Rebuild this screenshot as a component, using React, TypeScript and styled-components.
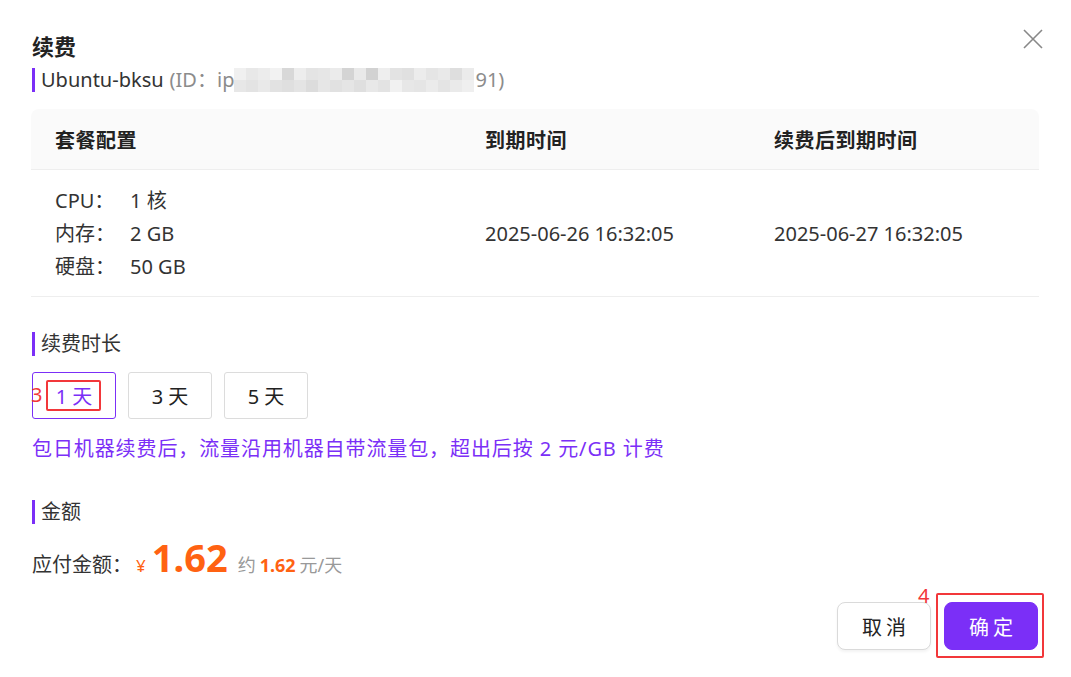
import React from "react";
import styled, { createGlobalStyle } from "styled-components";

const GlobalStyle = createGlobalStyle`
  html, body {
    margin: 0;
    padding: 0;
    background: #fff;
  }
  body {
    font-family: "Noto Sans", "Noto Sans CJK SC", sans-serif;
    color: #333;
  }
`;

const purple = "#7b2ff7";
const orange = "#ff6212";
const red = "#f2373a";

const Dialog = styled.div`
  position: relative;
  width: 1071px;
  height: 677px;
  box-sizing: border-box;
  padding: 32px 32px 0 32px;
  display: flex;
  flex-direction: column;
`;

const Title = styled.h2`
  margin: 0;
  font-size: 22px;
  line-height: 28px;
  font-weight: 700;
  color: #222;
`;

const CloseButton = styled.button`
  position: absolute;
  top: 27px;
  right: 26px;
  width: 24px;
  height: 24px;
  padding: 0;
  border: none;
  background: none;
  color: #888;
  display: flex;
  align-items: center;
  justify-content: center;
`;

const SectionLabel = styled.div<{ $mt?: number }>`
  display: flex;
  align-items: center;
  height: 24px;
  margin-top: ${(p) => p.$mt ?? 0}px;
  font-size: 20px;
  line-height: 24px;
  color: #333;
  border-left: 3px solid ${purple};
  padding-left: 6px;
`;

const Muted = styled.span`
  color: #8c8c8c;
  margin-left: 6px;
  display: inline-flex;
  align-items: center;
`;

const Mosaic = styled.span`
  display: inline-grid;
  grid-template-columns: repeat(20, 12px);
  grid-template-rows: 12px 12px;
  margin: 0 1px 0 0;
`;

const Tile = styled.span<{ $c: string }>`
  background: ${(p) => p.$c};
`;

const Table = styled.div`
  margin-top: 17px;
  width: 1008px;
  margin-left: -1px;
`;

const HeadRow = styled.div`
  display: grid;
  grid-template-columns: 430px 289px 1fr;
  height: 60px;
  align-items: center;
  padding: 0 24px;
  background: #fafafa;
  border-radius: 8px 8px 0 0;
  border-bottom: 1px solid #eeeeee;
  font-size: 20px;
  font-weight: 700;
  color: #222;
  letter-spacing: 0.5px;
`;

const BodyRow = styled.div`
  display: grid;
  grid-template-columns: 430px 289px 1fr;
  height: 126px;
  align-items: center;
  padding: 0 24px;
  border-bottom: 1px solid #eeeeee;
  font-size: 20px;
  color: #333;
`;

const SpecList = styled.div`
  display: grid;
  grid-template-columns: 75px auto;
  line-height: 33px;
`;

const DurationRow = styled.div`
  display: flex;
  gap: 12px;
  margin-top: 16px;
`;

const DurationButton = styled.button<{ $active?: boolean }>`
  position: relative;
  width: 84px;
  height: 47px;
  box-sizing: border-box;
  border: 1px solid ${(p) => (p.$active ? purple : "#dcdcdc")};
  border-radius: 3px;
  background: #fff;
  color: ${(p) => (p.$active ? purple : "#222")};
  font-family: inherit;
  font-size: 20px;
  padding: 0;
`;

const Notice = styled.p`
  margin: 17px 0 0;
  font-size: 20px;
  line-height: 26px;
  letter-spacing: 0.9px;
  color: ${purple};
`;

const AmountRow = styled.div`
  display: flex;
  align-items: baseline;
  margin-top: 11px;
  font-size: 20px;
  color: #333;
`;

const Currency = styled.span`
  color: ${orange};
  font-size: 17px;
  margin-left: 4px;
`;

const BigPrice = styled.span`
  color: ${orange};
  font-size: 38px;
  font-weight: 700;
  margin-left: 6px;
  line-height: 44px;
`;

const PerDay = styled.span`
  font-size: 18px;
  color: #999;
  margin-left: 10px;
`;

const PerDayPrice = styled.b`
  color: ${orange};
  font-weight: 700;
  margin: 0 4px;
`;

const Footer = styled.div`
  display: flex;
  justify-content: flex-end;
  gap: 13px;
  margin-top: 23px;
  padding-right: 1px;
`;

const FooterButton = styled.button<{ $primary?: boolean }>`
  position: relative;
  width: 94px;
  height: 48px;
  box-sizing: border-box;
  border-radius: 8px;
  font-family: inherit;
  font-size: 20px;
  letter-spacing: 4px;
  text-indent: 4px;
  padding: 0;
  border: 1px solid ${(p) => (p.$primary ? purple : "#dadada")};
  background: ${(p) => (p.$primary ? purple : "#fff")};
  color: ${(p) => (p.$primary ? "#fff" : "#222")};
  box-shadow: ${(p) => (p.$primary ? "none" : "0 2px 3px rgba(0,0,0,0.05)")};
`;

const MarkBox = styled.span<{ $l: number; $t: number; $w: number; $h: number }>`
  position: absolute;
  left: ${(p) => p.$l}px;
  top: ${(p) => p.$t}px;
  width: ${(p) => p.$w}px;
  height: ${(p) => p.$h}px;
  box-sizing: border-box;
  border: 2px solid ${red};
  border-radius: 2px;
`;

const MarkNum = styled.span<{ $l: number; $t: number; $size: number }>`
  position: absolute;
  left: ${(p) => p.$l}px;
  top: ${(p) => p.$t}px;
  color: ${red};
  font-size: ${(p) => p.$size}px;
  line-height: 1;
  letter-spacing: 0;
  text-indent: 0;
`;

const mosaicShades = [
  "#f0f0f0", "#e8e8e8", "#ececec", "#f2f2f2", "#d8d8d8", "#ededed", "#e4e4e4", "#e6e6e6",
  "#ebebeb", "#d4d4d4", "#e9e9e9", "#d2d2d2", "#eeeeee", "#e3e3e3", "#e0e0e0", "#ececec",
  "#e5e5e5", "#e9e9e9", "#dedede", "#ebebeb",
  "#e7e7e7", "#e3e3e3", "#e9e9e9", "#e2e2e2", "#dfdfdf", "#e4e4e4", "#dcdcdc", "#e6e6e6",
  "#e1e1e1", "#e5e5e5", "#dfdfdf", "#e8e8e8", "#e3e3e3", "#f1f1f1", "#e7e7e7", "#e5e5e5",
  "#ebebeb", "#e4e4e4", "#eaeaea", "#efefef",
];

const durations = [1, 3, 5];

export default function App() {
  return (
    <Dialog>
      <GlobalStyle />
      <Title>续费</Title>
      <CloseButton aria-label="close">
        <svg width="22" height="22" viewBox="0 0 22 22">
          <path d="M2 2 L20 20 M20 2 L2 20" stroke="currentColor" strokeWidth="1.6" />
        </svg>
      </CloseButton>

      <SectionLabel $mt={8}>
        Ubuntu-bksu
        <Muted>
          (ID：ip
          <Mosaic>
            {mosaicShades.map((c, i) => (
              <Tile key={i} $c={c} />
            ))}
          </Mosaic>
          91)
        </Muted>
      </SectionLabel>

      <Table>
        <HeadRow>
          <div>套餐配置</div>
          <div>到期时间</div>
          <div>续费后到期时间</div>
        </HeadRow>
        <BodyRow>
          <SpecList>
            <span>CPU：</span>
            <span>1 核</span>
            <span>内存：</span>
            <span>2 GB</span>
            <span>硬盘：</span>
            <span>50 GB</span>
          </SpecList>
          <div>2025-06-26 16:32:05</div>
          <div>2025-06-27 16:32:05</div>
        </BodyRow>
      </Table>

      <SectionLabel $mt={35}>续费时长</SectionLabel>
      <DurationRow>
        {durations.map((d) => (
          <DurationButton key={d} $active={d === 1}>
            {d} 天
            {d === 1 && (
              <>
                <MarkBox $l={13} $t={7} $w={55} $h={31} />
                <MarkNum $l={-2} $t={12} $size={20}>
                  3
                </MarkNum>
              </>
            )}
          </DurationButton>
        ))}
      </DurationRow>
      <Notice>包日机器续费后，流量沿用机器自带流量包，超出后按 2 元/GB 计费</Notice>

      <SectionLabel $mt={38}>金额</SectionLabel>
      <AmountRow>
        应付金额：
        <Currency>¥</Currency>
        <BigPrice>1.62</BigPrice>
        <PerDay>
          约<PerDayPrice>1.62</PerDayPrice>元/天
        </PerDay>
      </AmountRow>

      <Footer>
        <FooterButton>取消</FooterButton>
        <FooterButton $primary>
          确定
          <MarkBox $l={-9} $t={-10} $w={108} $h={65} />
          <MarkNum $l={-27} $t={-17} $size={20}>
            4
          </MarkNum>
        </FooterButton>
      </Footer>
    </Dialog>
  );
}
